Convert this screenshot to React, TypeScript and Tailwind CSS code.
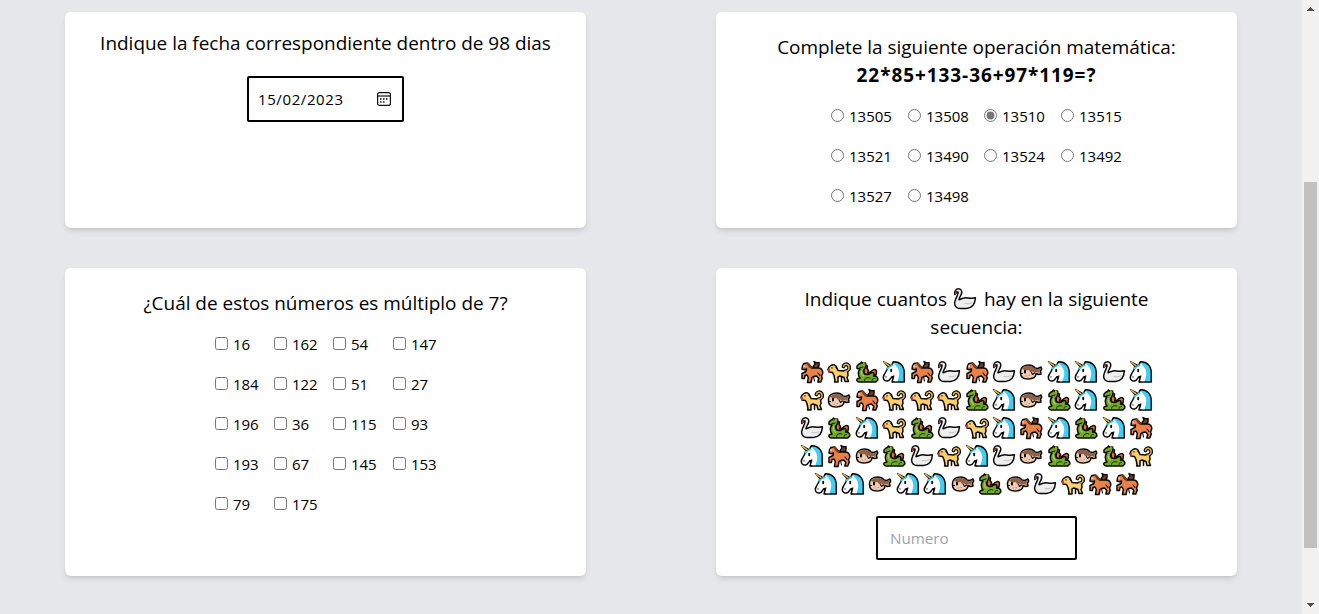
import React, { useState } from "react";

type Animal = "H" | "D" | "G" | "U" | "W" | "P";

const rows: string[] = [
  "HDGUHWHWPUUWU",
  "DPHDDDGUPGUGU",
  "WGUDGWDUHUGUH",
  "UHPGWDUWPGPGD",
  "UUPUUPGPWDHH",
];

const sums = ["13505", "13508", "13510", "13515", "13521", "13490", "13524", "13492", "13527", "13498"];

const multiples = [
  "16", "162", "54", "147",
  "184", "122", "51", "27",
  "196", "36", "115", "93",
  "193", "67", "145", "153",
  "79", "175",
];

function Horse() {
  return (
    <g>
      <path d="M13 8.500c0-2 .5-3.500 2-4.500l-1-2.500c2 1.500 3 1.500 5 1V5c0 2-1 3-3 4Z" fill="#6d3d26" />
      <path d="M2.500 6 4 3.500 7.500 3l3 3 1.500 2h6c3.500 0 4.800 2 4.800 5l-1.300 3 .8 2-1.500 4h-3l1-3.500-2.300-2.500-3 .5-1.500 1-1 5H7.500l.8-5-1.300-2.500-2 .5-.5 3H2V13.500l4-2L6.500 9l-2 .8L2 9Z" fill="#ea8248" />
      <path d="m5.500 3 3-.5 3.500 4.500v2.500L9 7.500 7.500 5Z" fill="#6d3d26" stroke="none" />
      <path d="M13.500 16.500 14.500 21M18 13l2 2.500" fill="none" strokeWidth="1.100" />
      <path d="M4 5.300v1.500" stroke="#fff" strokeWidth="1" />
    </g>
  );
}

function Dog() {
  return (
    <g>
      <path d="M18 11.500c4-.5 5-3.500 3.500-6C20 3.500 17 4 16.500 6.500" fill="none" strokeWidth="3.800" />
      <path d="m2 7 2-1.500C6 4 9 4.500 10 8l1 2.500 6 .5 3.500-.5.5 5-1 2 1.500 4H18l-1-4-4-1.500-2 1V22H7.500l.5-1.500-1-5-1.500-3-3.500-.5L1 9.500Z" fill="#ffce69" />
      <path d="M18 11.500c4-.5 5-3.500 3.500-6C20 3.500 17 4 16.500 6.500" fill="none" stroke="#eeb94f" strokeWidth="1.500" />
      <path d="M2 9.500v2" stroke="#e62b32" strokeWidth="1.800" />
      <path d="M5 7.500v.8M8.500 7l1.500 2" fill="none" strokeWidth="1" />
      <path d="M14.500 17v4.500" fill="none" strokeWidth="1.500" />
    </g>
  );
}

function Dragon() {
  return (
    <g>
      <path d="m9 5 3.500 1-.5 2.500 1.500 2-1 2.500 3-1c2-2.500 5-3.500 6-1l-.5 4-5 3-7-1Z" fill="#f36b2b" />
      <path d="m2 6 2-2 1.500-.5L6.500 2 8 3.200 10.500 3 11 5.500c0 2.500-2 3.500-2.500 5.500 0 2 1.500 3.500 4 3.500s3-2 5-2c1.500 0 2 1.500 1 3.500 3 0 4.800 1.500 4.300 4l-2 2H4c-2.500 0-3-3-1-3.500l2-.5c-3-4-2-6.500 0-9L2 8.500Z" fill="#73aa24" />
      <path d="M4.500 8 8 7" fill="none" strokeWidth="1" />
      <path d="M9.500 20.500c0-2.500 3-3.500 5.500-2.500M17 20.500c0-1.500 1-2 2.500-2" fill="none" stroke="#26440c" strokeWidth="1.100" />
      <path d="M6.500 11c-.5 2.500.5 4 2 5" fill="none" stroke="#a6cc52" strokeWidth="1.300" />
      <path d="m8.500 3.500 1.500.5" stroke="#e3a72d" fill="none" strokeWidth="1.200" />
    </g>
  );
}

function Unicorn() {
  return (
    <g>
      <path d="M10 4.500 11.500 1.800C18 1.500 22.300 6 22.300 13v9H12L8 9Z" fill="#3dcff5" />
      <path d="M6 7.500 10 5 11.800 2.200 13 4.800c3.500 3 5 7.200 4 11.200l-1.500 5.300h-5l1.300-5.300c-2 .3-3 1-4 3.200-1 2-3.500 2.300-5 .8-1.600-1.500-1.300-3.500-.2-5.500l2.600-4.500Z" fill="#fff" stroke="none" />
      <path d="M11.500 22H10l1.500-5.500c-2 .3-2.700 1-3.500 2.700-1 2-3.800 2.500-5.500 1-1.700-1.600-1.400-3.700-.2-5.700l2.500-4.500L5.500 8M10 4.500l1.500-2.700" fill="none" />
      <path d="m4 8.500 1.500-3L10 4.300l2 1.200L8.500 7.200 6 9.500Z" fill="#3dcff5" stroke="none" />
      <path d="m1.500 1.500 4.500 5L8.200 5Z" fill="#efb33b" strokeWidth="1.300" />
      <path d="m2 2 4.800 3.700" stroke="#efb33b" strokeWidth="1.500" />
      <path d="M9.200 9.800v1.400" strokeWidth="1.900" />
      <path d="M4 16.700v.5M9.500 16.800l2.500-.8" fill="none" strokeWidth="1" />
    </g>
  );
}

function Swan() {
  return (
    <g>
      <path d="M1.800 7.500C1.500 3.500 3 1.800 5.500 1.800c3.500 0 4 3.500 2.500 6-1 2-2 3.500-2 5l4-1.500c3-1.500 6 1 12.500-.5-.5 6-3 10.500-9 10.700H7.500C1.500 21.500.7 16.500 2.500 12.500 3.500 10 5.500 7 5 5L3 6Z" fill="#eee" />
      <path d="M2.500 3.500 4.500 4l-.7 2-1.600 2Z" fill="#60372e" stroke="none" />
      <path d="m2.100 5.800 1.200-.7-.6 2.200Z" fill="#f16a3c" stroke="none" />
      <path d="M12 16.500c3 .5 5 .2 7-.8" fill="none" stroke="#c4c4c4" strokeWidth="1" />
    </g>
  );
}

function Puffer() {
  return (
    <g>
      <path d="M1.500 11c0-4 4-6 8-6 3 0 5 1 6.500 3l3 .5 3-1.500.7 2-1.200 2 .5 3-2.500.5-2.500-1c0 4-3 5.500-8 5.500s-7.500-2.500-7.500-6Z" fill="#efcdb5" />
      <path d="M2.500 9c2-3.500 9-5 13-.5l3 .8 3-1.300.3 1-1.300 2 .4 2-3.400-1-2 1-2-1.500-2 1-2-2.500-3 .5-2-1Z" fill="#8f6247" stroke="none" />
      <path d="M6 10.800v1.600" strokeWidth="2" />
      <path d="M1.500 13.500h2M12.500 12.500l1 2 2-1.500" fill="none" strokeWidth="1.100" />
      <path d="M7 16h.6M10 15.500h.6M9 18h.6M12 17.500h.6" stroke="#b87f6c" strokeWidth=".9" />
    </g>
  );
}

const drawings: Record<Animal, () => React.JSX.Element> = {
  H: Horse,
  D: Dog,
  G: Dragon,
  U: Unicorn,
  W: Swan,
  P: Puffer,
};

function AnimalIcon({ kind }: { kind: Animal }) {
  const Drawing = drawings[kind];
  return (
    <svg viewBox="0 0 24 24" className="block size-6 shrink-0" stroke="#080808" strokeWidth="1.500" strokeLinejoin="round" strokeLinecap="round">
      <Drawing />
    </svg>
  );
}

function CalendarIcon() {
  return (
    <svg viewBox="0 0 16 16" className="size-4" fill="none" stroke="#111" strokeWidth="1.200">
      <rect x="1.600" y="1.600" width="12.800" height="12.800" rx="2" />
      <path d="M1.600 5h12.800" />
      <path d="M7 8h1.500M10 8h1.500M4 11h1.500M7 11h1.500" strokeWidth="1.500" />
      <path d="M4 8h1.500" strokeWidth="1.500" />
    </svg>
  );
}

const card = "flex w-[521px] flex-col items-center rounded-md bg-white shadow-md";

export default function App() {
  const [sum, setSum] = useState("13510");
  return (
    <div className="flex h-[614px] w-[1319px] overflow-hidden bg-[#e5e7eb] font-['Open_Sans','Noto_Sans',sans-serif] text-black">
      <main className="grid w-[1302px] grid-cols-[521px_521px] grid-rows-[216px_308px] content-start gap-x-[130px] gap-y-10 pt-3 pl-[65px]">
        <section className={card}>
          <h2 className="mt-[17px] text-[18.950px] leading-7 whitespace-nowrap">Indique la fecha correspondiente dentro de 98 dias</h2>
          <div className="mt-[19px] flex h-[46px] w-[157px] items-center justify-between rounded-[2px] border-2 border-black pr-2.5 pl-[9px]">
            <span className="text-[15px] tracking-[0.600px]">15/02/2023</span>
            <CalendarIcon />
          </div>
        </section>

        <section className={card}>
          <h2 className="mt-[21px] text-center text-[18.950px] leading-7 whitespace-nowrap">
            Complete la siguiente operación matemática:
            <br />
            <b className="tracking-[0.950px]">22*85+133-36+97*119=?</b>
          </h2>
          <div className="mt-[15px] grid grid-cols-[77px_76px_77px_61px] gap-y-4">
            {sums.map((n) => (
              <label key={n} className="flex h-6 items-start">
                <input type="radio" name="sum" checked={sum === n} onChange={() => setSum(n)} className="mt-[5px] mr-[5px] size-[13px] accent-[#767676]" />
                <span className="text-[15px] leading-6">{n}</span>
              </label>
            ))}
          </div>
        </section>

        <section className={card}>
          <h2 className="mt-[21px] text-[18.950px] leading-7 whitespace-nowrap">¿Cuál de estos números es múltiplo de 7?</h2>
          <div className="mt-[15px] grid grid-cols-[59px_59px_60px_43px] gap-y-4">
            {multiples.map((n) => (
              <label key={n} className="flex h-6 items-start">
                <input type="checkbox" className="mt-[5px] mr-[5px] size-[13px]" />
                <span className="text-[15px] leading-6 tracking-[-0.100px]">{n}</span>
              </label>
            ))}
          </div>
        </section>

        <section className={card}>
          <h2 className="mt-[17px] flex flex-col items-center text-[19px] leading-7 whitespace-nowrap">
            <span className="flex items-center">
              Indique cuantos
              <span className="mr-[7px] ml-1.5"><AnimalIcon kind="W" /></span>
              hay en la siguiente
            </span>
            <span>secuencia:</span>
          </h2>
          <div className="mt-[17px] flex flex-col items-center">
            {rows.map((row, r) => (
              <div key={r} className="flex h-7 items-center gap-[3.450px]">
                {row.split("").map((c, i) => (
                  <AnimalIcon key={i} kind={c as Animal} />
                ))}
              </div>
            ))}
          </div>
          <input placeholder="Numero" className="mt-[18px] h-11 w-[201px] rounded-[2px] border-2 border-black px-3 text-[15.200px] placeholder:text-[#9ca3af]" />
        </section>
      </main>

      <aside className="flex w-[17px] flex-col items-center bg-[#f1f1f1]">
        <svg viewBox="0 0 17 17" className="size-[17px]" fill="#505050" shapeRendering="crispEdges">
          <path d="M5 11h7L8.500 7Z" />
        </svg>
        <div className="mt-[165px] h-[366px] w-[13px] bg-[#c1c1c1]" />
        <svg viewBox="0 0 17 17" className="mt-auto size-[17px]" fill="#505050" shapeRendering="crispEdges">
          <path d="M5 6h7l-3.500 4Z" />
        </svg>
      </aside>
    </div>
  );
}
